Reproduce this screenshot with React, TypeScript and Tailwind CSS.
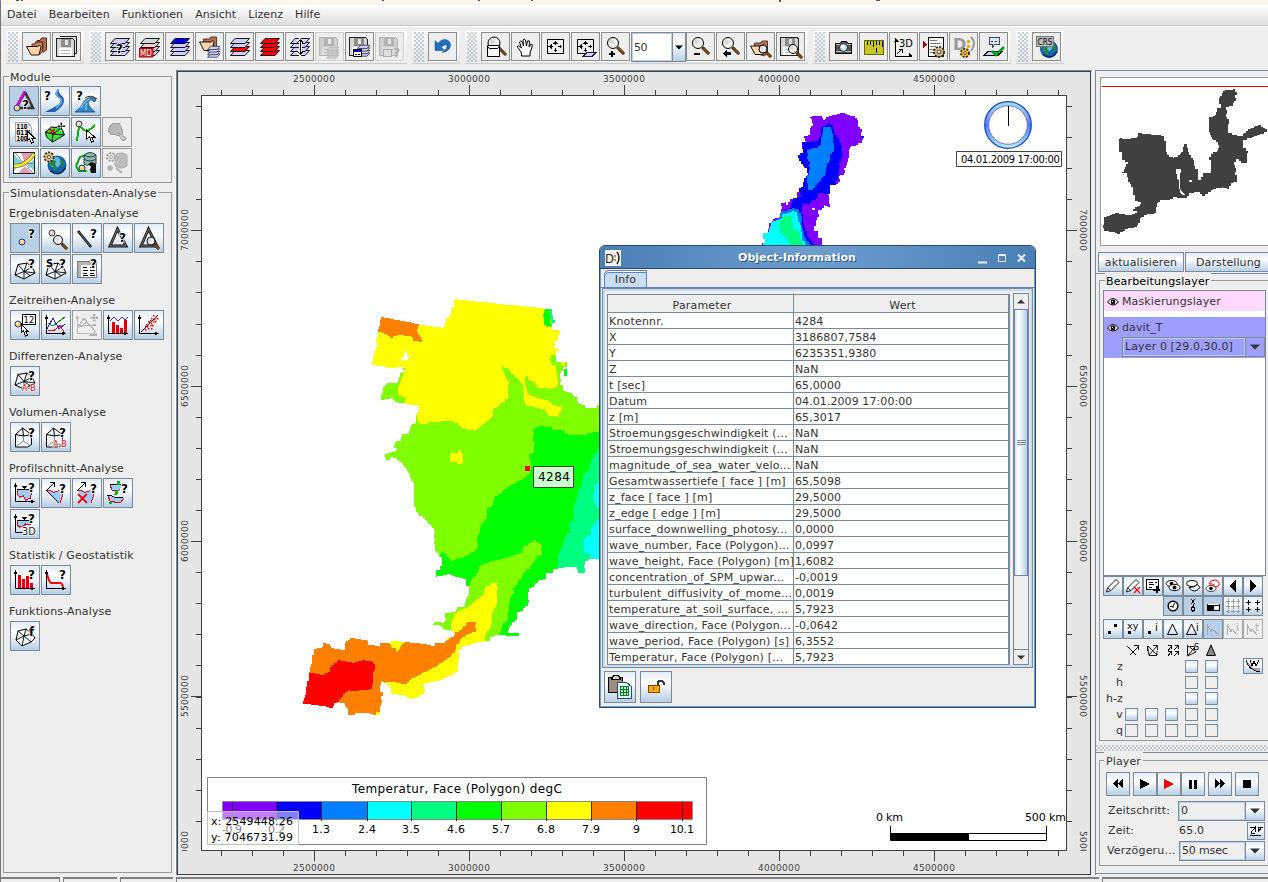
import React from "react";

type Kids = { children?: React.ReactNode };

/* ---------- icon helpers ---------- */
const Q = ({ x = 18, y = 14, s = 12, t = "?" }: { x?: number; y?: number; s?: number; t?: string }) => (
  <text x={x} y={y} fontSize={s} fontWeight="bold" fontFamily="DejaVu Sans" fill="#000" stroke="#fff" strokeWidth="1.600" paintOrder="stroke">{t}</text>
);
const Mag = ({ x, y, r = 5 }: { x: number; y: number; r?: number }) => (
  <g shapeRendering="auto">
    <path d={`M${x + r * 0.8} ${y + r * 0.8}L${x + r * 2} ${y + r * 2}`} stroke="#2a1405" strokeWidth="3" />
    <path d={`M${x + r * 0.9} ${y + r * 0.9}L${x + r * 2} ${y + r * 2}`} stroke="#8b4a14" strokeWidth="1.800" />
    <circle cx={x} cy={y} r={r} fill="#efefec" stroke="#000" />
    <circle cx={x - r * 0.25} cy={y - r * 0.25} r={r * 0.4} fill="#d5d5d2" />
  </g>
);
const Node = ({ x, y }: { x: number; y: number }) => (
  <g shapeRendering="auto">
    <circle cx={x} cy={y} r="3" fill="#ffc878" stroke="#1c3f94" />
    <circle cx={x - 0.6} cy={y - 0.8} r="1" fill="#fff" />
  </g>
);
const Layers = ({ fills, x = 0, y = 0, k = 1, stroke = "#000" }: { fills: string[]; x?: number; y?: number; k?: number; stroke?: string }) => (
  <g transform={`translate(${x} ${y}) scale(${k})`} shapeRendering="auto">
    {[3, 2, 1, 0].map((i) => (
      <path key={i} d={`M10 ${6.5 + i * 4}h14.5l-4.500 5h-14.500z`} fill={fills[i]} stroke={stroke} strokeWidth=".9" />
    ))}
  </g>
);
const L = "#ccccff";
const R = "#ff0000";
const G = "#cdcdcd";
const OneFolder = () => (
  <g shapeRendering="auto">
    <path d="M8.500 17V7h6l1.500-2h5.500v12l-3 3z" fill="#b9714e" stroke="#3a1a0c" strokeWidth=".8" />
    <path d="M4.500 10h12l1-1.500 1.500 1.500-2 8.500h-8z" fill="#ffd3a8" stroke="#000" strokeWidth=".9" />
  </g>
);
const Floppy = ({ dim, x = 0, y = 0 }: { dim?: boolean; x?: number; y?: number }) => (
  <g transform={`translate(${x} ${y})`}>
    <path d="M4.500 5.500h16l2 2v16h-18z" fill={dim ? "#cfcfcf" : "#d6d6d6"} stroke={dim ? "#b4b4b4" : "#222"} />
    <path d="M9 6h10v8h-10z" fill={dim ? "#b4b4b4" : "#8e8e8e"} />
    <path d="M13 7h3v5h-3z" fill="#e6e6e6" />
    <path d="M7 15h13v8h-13z" fill={dim ? "#dedede" : "#fafafa"} />
    <path d="M9 17.500h9M9 20.500h9" stroke="#bbb" />
  </g>
);
const Mesh = ({ y = 0 }: { y?: number }) => (
  <g transform={`translate(0 ${y})`} stroke="#000" fill="#f2f6fa" shapeRendering="auto">
    <path d="M8 10.500l9-1.500 5 4 3 6-11 6-9-4z" />
    <path d="M8 10.500l6 7 3-8.500M14 17.500l11 1.500M14 17.500l-9 3.500M14 17.500v7M14 17.500l6 4M14 17.500l8-4.500" fill="none" strokeWidth=".9" />
  </g>
);
const Axes = ({ c = "#000" }: { c?: string }) => (
  <g>
    <path d="M5.500 6v17.500h19" fill="none" stroke={c} strokeWidth="1.200" />
    <path d="M3.500 9l2-4 2 4zM21 21.500l4 2-4 2z" fill={c} />
  </g>
);
const Gear = ({ x, y, r = 5, c = "#d8b878" }: { x: number; y: number; r?: number; c?: string }) => (
  <g shapeRendering="auto">
    <circle cx={x} cy={y} r={r} fill={c} stroke="#3a2a10" strokeWidth="2" strokeDasharray="2 1.300" />
    <circle cx={x} cy={y} r={r - 1} fill={c} />
    <circle cx={x} cy={y} r={r * 0.35} fill="#fff" stroke="#3a2a10" strokeWidth=".8" />
  </g>
);
const Globe = ({ x, y, r }: { x: number; y: number; r: number }) => (
  <g shapeRendering="auto">
    <circle cx={x} cy={y} r={r} fill="#1a5fb0" />
    <circle cx={x - r * 0.2} cy={y - r * 0.3} r={r * 0.6} fill="#5fb6e6" />
    <path d={`M${x - r * 0.9} ${y - r * 0.1}q${r * 0.4} ${-r * 0.6} ${r * 0.8} ${-r * 0.3}l-1 3 2 3-2 4q-3-2-2-5zM${x + r * 0.3} ${y - r * 0.6}l${r * 0.5} 3-1 5-3-3z`} fill="#1d8a3a" />
    <path d={`M${x - r * 0.7} ${y + r * 0.6}q${r} ${r * 0.7} ${r * 1.6}-3`} stroke="#0a2c60" strokeWidth="1.500" fill="none" />
  </g>
);
const Four = () => (
  <g stroke="#000" fill="none">
    <path d="M6.500 7.500h16v14h-16z" />
    <path d="M14.500 10v3M14.500 16v3M9 14.500h3M17 14.500h3" />
    <path d="M12 11.500l2.500-3 2.500 3zM12 17.500l2.500 3 2.500-3zM10.500 12l-3 2.500 3 2.500zM18.500 12l3 2.500-3 2.500z" fill="#000" stroke="none" />
  </g>
);
const Red = ({ x, y, t = "A-B" }: { x: number; y: number; t?: string }) => (
  <text x={x} y={y} fontSize="9.500" fontFamily="DejaVu Sans" fill="#e00000" stroke="#fff" strokeWidth="1.200" paintOrder="stroke" textLength="14" lengthAdjust="spacingAndGlyphs">{t}</text>
);
const Volume = () => (
  <g stroke="#000" fill="#f3f7fb" shapeRendering="auto">
    <path d="M5.500 12.500l7-6.500 9 6.500v10l-4 2.500h-12z" />
    <path d="M5.500 12.500l8 1.500 8-1.500M12.500 6l1 8" fill="none" />
    <path d="M13.500 14v5l-7 5M13.500 19l6 4" fill="none" stroke="#888" />
  </g>
);

const icons: Record<string, React.ReactNode> = {
  open: (
    <g shapeRendering="auto" strokeWidth=".9">
      <path d="M15 15V8.500h3l1.500-2.500h5v12l-3 2z" fill="#b9714e" stroke="#4a2010" />
      <path d="M13 10h9l-1 7h-5z" fill="#f0bd94" stroke="#7a3c20" />
      <path d="M10 17v-5h3l1.500-2h6v10l-3 2z" fill="#c98058" stroke="#4a2010" />
      <path d="M4.500 14.500h11.500l1.500-1.500 1.500 1.500-2 8.500h-8z" fill="#ffd3a8" stroke="#000" />
    </g>
  ),
  saveAll: <g><path d="M8 4.500h16.500v17h-2" fill="#ddd" stroke="#222" /><Floppy x={-0.500} y={0.500} /></g>,
  layQ: <g><Layers fills={[L, L, L, L]} /><Q x={11} y={21} /></g>,
  layMD: <g><Layers fills={["#cdd9dd", "#ffc8c8", "#cdd9dd", L]} /><path d="M4 16h14v9h-14z" fill="#c41b1b" stroke="#900" strokeWidth=".5" /><text x="5" y="23.500" fontSize="8" fill="#fff" fontFamily="DejaVu Sans" textLength="12" lengthAdjust="spacingAndGlyphs">MD</text></g>,
  layBlue: <Layers fills={["#0000e6", L, L, L]} />,
  layFolder: <g><OneFolder /><Layers fills={[L, L, L, L]} x={9} y={10} k={0.65} /></g>,
  layRed1: <Layers fills={[L, L, R, L]} />,
  layRed: <Layers fills={[R, R, R, R]} />,
  layMove: <g><Layers fills={[L, L, L, L]} /><path d="M15 8v14M12.500 10.500L15 8l2.500 2.500M12.500 19.500L15 22l2.500-2.500" stroke="#fff" strokeWidth="3" fill="none" /><path d="M15.500 8v14M12.500 10.500L15.500 8l2.500 2.500M12.500 19.500L15.500 22l2.500-2.500" stroke="#000" fill="none" /></g>,
  saveDim: <g><Floppy dim /><Layers fills={[G, G, G, G]} stroke="#aaa" x={8} y={11} k={0.65} /></g>,
  saveLay: <g><Floppy /><Layers fills={[L, L, L, L]} x={9} y={9} k={0.65} /><path d="M8.500 17.500h8v7h-8z" fill="#fff" stroke="#000" /><path d="M9 18h7v2h-7z" fill="#00c" /><path d="M10 22.500h2M13 22.500h2" stroke="#000" /></g>,
  saveDimQ: <g><Floppy dim /><path d="M8.500 17.500h8v7h-8z" fill="#ddd" stroke="#aaa" /><text x="18" y="25" fontSize="12" fontWeight="bold" fill="#b0b0b0" fontFamily="DejaVu Sans">?</text></g>,
  undo: <path shapeRendering="auto" d="M7 8.500v10h9.500l-3.200-3.200q3-3.300 5.200-2.300 2 3-4.500 7.500 8-1 8.500-7.500-.5-5.500-6.500-5.500-3.500.500-6 3.800z" fill="#1e6fc0" stroke="#0c4a90" strokeWidth=".5" />,
  magBox: <g><Mag x={13} y={11} r={6} /><path d="M6.500 13.500h12v11h-12z" fill="#fff" stroke="#000" /><path d="M6.500 15.500q6 3 12 0" fill="none" stroke="#000" /></g>,
  hand: <path shapeRendering="auto" d="M10.500 24v-3l-4-6q0-3 4 1l-2-6q1-2 3 0l1 4-.5-6q1-2 2.500 0l1 6 1-5q2-1 2 1l-.5 5 2-3q2 0 1 3l-2 6v3z" fill="#fff" stroke="#000" />,
  fit: <Four />,
  fitLay: <g><Four /><path d="M16 20.500h9l-4 4h-9z" fill={L} stroke="#223" /></g>,
  zoomIn: <g><Mag x={12} y={11} r={5.500} /><path d="M8 21h6v2h-6zM10 19h2v6h-2z" fill="#000" /></g>,
  zoomOut: <g><Mag x={12} y={11} r={5.500} /><path d="M8 21h6v2h-6z" fill="#000" /></g>,
  zoomBack: <g><Mag x={12} y={11} r={5.500} /><path d="M7 21.500l4-3.500v2h4v3h-4v2z" fill="#000" /></g>,
  zoomFolder: <g><g transform="translate(0 4)"><OneFolder /></g><Mag x={17} y={17} r={4} /></g>,
  zoomSave: <g><Floppy y={-0.500} /><Mag x={17} y={17} r={4.500} /></g>,
  camera: <g><path d="M6.500 11.500h4l2-2h5l2 2h3v10h-16z" fill="#555" stroke="#000" /><path d="M7 12.500h15M7 19.500h15" stroke="#bbb" /><circle cx="14.500" cy="15.500" r="4" fill="#bfe9ee" stroke="#222" shapeRendering="auto" /><circle cx="13.500" cy="14.500" r="1.500" fill="#fff" /></g>,
  ruler: <g><path d="M5.500 8.500h19v14h-19z" fill="#c8c82a" stroke="#6b6b00" /><path d="M8.500 9v4M11.500 9v4M14.500 9v6M17.500 9v4M20.500 9v4M23 9v6M17.500 16v5" stroke="#000" /></g>,
  axis3d: <g><path d="M6.500 7v17h16M8 22l5-5M10 17.500h3v3" stroke="#000" fill="none" /><path d="M5 10l1.500-4L10 10zM20 21v3h4z" /><text x="10" y="15" fontSize="11" fontFamily="DejaVu Sans" textLength="14" lengthAdjust="spacingAndGlyphs">3D</text></g>,
  scriptGear: <g><path d="M9.500 5.500h15v19h-15z" fill="#fff" stroke="#000" /><path d="M11 8.500h7M11 11.500h10M11 14.500h6M11 17.500h5M11 20.500h4" stroke="#777" /><path d="M4 9l4 3.500-4 3.500z" fill="#a00" /><Gear x={20} y={20} c="#c8b48a" /></g>,
  dGear: <g><text x="4" y="18" fontSize="16" fontFamily="DejaVu Sans" fontWeight="bold" fill="#999">D</text><path d="M18 8h2.500v2.500h-2.500zM18 13h2.500v2.500h-2.500z" fill="#fa0" /><path d="M22 5q6 6 0 14" fill="none" stroke="#999" strokeWidth="2" shapeRendering="auto" /><Gear x={16} y={21} r={4} c="#ffb62e" /></g>,
  check: <g><path d="M10.500 5.500h10v7h-5l-2 3v-3h-3z" fill="#dbe8fa" stroke="#446" /><path d="M12 9.500h2M16 9.500h2" stroke="#223a66" /><path d="M9 19.500h14l-4 4h-14z" fill="#c8d4fa" stroke="#000" /><path d="M13 19l4 4 8-8" stroke="#0a9a20" strokeWidth="2.600" fill="none" shapeRendering="auto" /></g>,
  crs: <g><Globe x={17} y={17} r={9} /><path d="M4.500 4.500h17v10h-17z" fill="#bbb" stroke="#777" /><text x="5.500" y="13" fontSize="9" fontFamily="DejaVu Sans" textLength="15" lengthAdjust="spacingAndGlyphs">CRS</text></g>,
  triQ: <g shapeRendering="auto"><path d="M16 6L7 22h17L16 6" fill="none" stroke="#333" strokeWidth="2.600" /><path d="M16 5L7 22" stroke="#d400d4" strokeWidth="2.600" /><Node x={8} y={22} /><Q x={13} y={23} /></g>,
  river: <g shapeRendering="auto"><path d="M18 3q-6 5 1 9 4 4-3 8-5 3-11 6h10q12-8 8-15-5-4-4-7z" fill="#1f62ae" /><path d="M18 4q-4 5 3 9 2 4-5 9" stroke="#6db0e8" strokeWidth="1.600" fill="none" /><Q x={4} y={14} /></g>,
  wave: <g shapeRendering="auto"><path d="M4 26q7-5 8-9 4-7 12-5 2 3-1 4-2-3-4-2-3 2-1 6 2 3 6 6z" fill="#2f87c8" stroke="#15406e" strokeWidth=".8" /><path d="M10 22q4-8 9-9M15 24q-1-5 1-7" stroke="#a8e2f8" fill="none" /><path d="M14 12q6-4 12 1" stroke="#333" fill="none" /><Q x={5} y={14} /></g>,
  bits: <g><path d="M6.500 5.500h12l4 5v14h-16z" fill="#f0f0f0" stroke="#aaa" />{["110", "011(", "100"].map((s, i) => <text key={i} x="7.500" y={11.500 + i * 6} fontSize="7" fontWeight="bold" fontFamily="DejaVu Sans" textLength={i === 1 ? 14 : 11} lengthAdjust="spacingAndGlyphs">{s}</text>)}<path d="M18.500 14v9l2-1 2 4 2-1-2-4h3z" fill="#fff" stroke="#000" /></g>,
  polyPlus: <g><path d="M5.500 15l6-5 10 1 3 7-12 7-6-5z" fill="#35e835" stroke="#000" shapeRendering="auto" /><path d="M5 15l8 2 8-6M13 17l11 1M13 17l-1 8" stroke="#000" fill="none" shapeRendering="auto" /><path d="M9 12l7 5M10 17l4-5" stroke="#d00" strokeWidth="1.600" /><path d="M17 8h8v2h-8zM20 5h2v8h-2z" fill="#000" stroke="#fff" strokeWidth=".5" /></g>,
  pathSel: <g><path d="M6 24l2-15 8 6 8-7" stroke="#0b0" strokeWidth="2" fill="none" /><Node x={8} y={7} /><path d="M15.500 13v9l3-2 2 5 2-1-2-4h3z" fill="#fff" stroke="#000" /></g>,
  dimPoly: <g><path d="M6 12l5-6h6l3 6v7l-6-1-6-1z" fill="#b8b8b8" stroke="#a5a5a5" /><path d="M16 15l8 6-2 3-3-2z" fill="#ccc" stroke="#aaa" /></g>,
  map: <g><path d="M4.500 4.500h21v21h-21z" fill="#fff" stroke="#222" /><path d="M12 5h12l-8 9zM9 25l7-7 6 7z" fill="#e89ab4" /><path d="M5 7l8 7-8 9zM18 17l7-5v10z" fill="#79cfd8" /><path d="M6 5l18 20M24 16l-9-1" stroke="#777" strokeWidth=".8" /><g shapeRendering="auto"><path d="M5 18q8 0 12-4 5-3 8-8" stroke="#555" strokeWidth="4" fill="none" /><path d="M5 18q8 0 12-4 5-3 8-8" stroke="#ffe32e" strokeWidth="2.800" fill="none" /></g></g>,
  globeGear: <g><Globe x={17} y={17} r={9.500} /><Gear x={9} y={9} r={4.500} c="#e0c090" /></g>,
  dbHead: <g shapeRendering="auto"><path d="M5 18l4-9 6-2M5 18l3 5h8" stroke="#0a0" strokeWidth="2" fill="none" /><path d="M13 7q6-5 12 0v9q-6 4-12 0z" fill="#8fb8ae" stroke="#244" /><path d="M13 7q6 4 12 0M13 11q6 4 12 0" stroke="#244" fill="none" /><path d="M17 17q2-5 8-1v9h-5l-1-3q-3 0-2-5z" fill="#111" /><path d="M16 18q3-2 4 1l-2 4z" fill="#fff" /><Node x={11} y={20} /></g>,
  dimGear: <g shapeRendering="auto"><Gear x={9} y={9} r={4} c="#c4c4c4" /><path d="M3 3h11v11h-11z" fill="#eee" opacity=".6" /><path d="M13 7q6-4 12 0v11q-6 4-12 0z" fill="#bdbdbd" stroke="#b0b0b0" /><circle cx="8" cy="20" r="2.800" fill="#b4b4b4" /><path d="M14 20l6 5" stroke="#bbb" strokeWidth="2.500" /></g>,
  nodeQ: <g><Node x={12} y={19} /><Q x={18} y={15} /></g>,
  nodeMag: <g><Node x={11} y={10} /><Mag x={17} y={17} r={4.500} /></g>,
  lineQ: <g shapeRendering="auto"><path d="M6 8l13 16" stroke="#000" strokeWidth="2.600" /><path d="M7 9l11 14" stroke="#888" /><Q x={18} y={15} /></g>,
  triangleQ: <g shapeRendering="auto"><path d="M14.500 6L7 23h16z" fill="none" stroke="#111" strokeWidth="2.800" /><path d="M14.500 6L7 23h16z" fill="none" stroke="#999" strokeWidth=".8" /><Q x={16} y={19} /></g>,
  triangleMag: <g shapeRendering="auto"><path d="M14.500 6L7 23h16z" fill="none" stroke="#111" strokeWidth="2.800" /><path d="M14.500 6L7 23h16z" fill="none" stroke="#999" strokeWidth=".8" /><Mag x={17} y={18} r={4} /></g>,
  meshQ: <g><Mesh /><Q x={18} y={14} /></g>,
  meshS: <g><Mesh /><Q x={5} y={13} t="S" s={10} /><Q x={18} y={14} /></g>,
  tableQ: <g><path d="M5.500 7.500h19v16h-19z" fill="#fff" stroke="#777" /><path d="M6 8h3v15h-3zM9 8h15v3h-15z" fill="#b4b4b4" /><path d="M11 13.500h4M11 16.500h5M11 19.500h4M11 21.500h5M18 13.500h4M18 16.500h5M18 19.500h4M18 21.500h5" stroke="#000" /><Q x={18} y={14} /></g>,
  node12: <g><Node x={8} y={14} /><path d="M12.500 4.500h13v10h-13z" fill="#fff" stroke="#000" /><text x="13.500" y="13" fontSize="9.500" fontFamily="DejaVu Sans" textLength="11" lengthAdjust="spacingAndGlyphs">12</text><path d="M11.500 14v8l2-1 2 5 2-1-2-4h2z" fill="#fff" stroke="#000" /></g>,
  chart: <g><path d="M7 13l5 3 12-9" stroke="#080" fill="none" /><path d="M6 19l6-11 6 11 6-5" stroke="#22f" fill="none" /><path d="M7 20.500h6l6-5 5 8" stroke="#f00" fill="none" /><Axes /></g>,
  chartDim: <g><Axes c="#bbb" /><path d="M6 15h18M6 17l6-9 6 8 6-2M7 18l8-6 9 10" stroke="#b4b4b4" fill="none" /><path d="M18 6h8v3h-8zM20.500 3.500h3v8h-3zM17 23h8v3h-8z" fill="#b0b0b0" stroke="#eee" strokeWidth=".5" /></g>,
  bars: <g><path d="M9 12h3v12h-3zM13 15h3v9h-3zM17 18h3v6h-3zM21 10h3v14h-3z" fill="#e00000" /><path d="M7 11l4-4 4 4 4-4 3 3 3-3" stroke="#22f" fill="none" /><Axes /></g>,
  scatter: <g><path d="M7 22L24 5" stroke="#000" />{[[12, 14], [15, 12], [17, 8], [19, 11], [14, 18], [18, 15], [21, 7], [21, 11], [11, 19], [16, 15], [17, 18], [19, 5], [14, 11], [23, 8], [16, 10], [11, 16], [20, 9], [13, 16], [17, 13]].map(([a, b], i) => <rect key={i} x={a} y={b} width="1.500" height="1.500" fill="#e00" shapeRendering="auto" />)}<Axes /></g>,
  meshAB: <g><Mesh y={-2} /><Q x={18} y={14} /><Red x={12} y={25} /></g>,
  volQ: <g><Volume /><Q x={18} y={15} /></g>,
  volAB: <g><Volume /><Q x={18} y={15} /><Red x={12} y={25} /></g>,
  prof: <g><path d="M7 12h14l1 4-2 4-4 2-2-4-4 1-2-3z" fill="#9cccff" /><path d="M7.500 12v4l2 3 4-1 2 4 5-2 1-5" stroke="#e00" fill="none" /><path d="M7 11.500h14" stroke="#000" /><path d="M11 8h6l-3 3z" /><Axes /><Q x={18} y={14} /></g>,
  prof3d: <g><path d="M7 12h14v4l-5-1-3 3h-5z" fill="#9cccff" /><path d="M7.500 12v4l2 2 4-1 2-2 5 1" stroke="#e00" fill="none" /><path d="M7 11.500h14" stroke="#000" /><path d="M11 8h6l-3 3z" /><path d="M5.500 6v17.500h7" stroke="#000" fill="none" strokeWidth="1.200" /><path d="M3.500 9l2-4 2 4z" /><Q x={18} y={14} /><text x="12" y="26" fontSize="11" fontFamily="DejaVu Sans" fill="#222" stroke="#fff" strokeWidth="1.600" paintOrder="stroke" textLength="14" lengthAdjust="spacingAndGlyphs">3D</text></g>,
  wedge: <g><path d="M6 13h13l4 2-4 10z" fill="#9cccff" /><path d="M5 12.500h4l4 2 5-2M22 16l-3 9" stroke="#e00" fill="none" /><path d="M6 13l12 12M5 13l8-8M9 4.500h4v4" stroke="#000" fill="none" /><Q x={18} y={15} /></g>,
  wedgeX: <g><path d="M6 13h13l4 2-4 10h-5z" fill="#9cccff" /><path d="M5 12.500h4l4 2 5-2M22 16l-3 9" stroke="#e00" fill="none" /><path d="M5 13l8-8M9 4.500h4v4" stroke="#000" fill="none" /><path d="M6 16l9 9M15 16l-9 9" stroke="#f00" strokeWidth="1.800" shapeRendering="auto" /><Q x={18} y={15} /></g>,
  flow: <g><path d="M7 7h12l-3 6-6 1z" fill="#9cccff" /><path d="M7 7l2 5h3l2 2 3-3" stroke="#e00" fill="none" /><path d="M5 18l7 1 9 1-4 4-8 1z" fill="#9cccff" /><path d="M5 18l2 5h3l3 2 5-1 3-4" stroke="#e00" fill="none" /><path d="M7 6.500h12M4 17.500h4l4 2h8" stroke="#000" fill="none" /><path d="M14 3h3v4h-3zM13 12h3l-2 5h-3zM6 24h3v2h-3z" fill="#0b0" /><Q x={18} y={15} /></g>,
  stat: <g><path d="M8 10h3v14h-3zM12 14h3v10h-3zM16 11h3v13h-3zM20 18h3v6h-3z" fill="#e00000" /><Axes /><Q x={18} y={14} /></g>,
  curve: <g><path d="M6 9q2 8 4 9h9q3 0 3 6" stroke="#f00" strokeWidth="2" fill="none" shapeRendering="auto" /><Axes /><Q x={18} y={14} /></g>,
  func: <g shapeRendering="auto"><path d="M8 10l8-2 6 5 3 4-4 4-9 4-6-6z" fill="#f4f8fb" stroke="#000" /><path d="M8 10l6 5 8-2M14 15l7 6M14 15l-2 10M14 15l-8 4M16 8l-2 7" stroke="#000" strokeWidth=".9" fill="none" /><Q x={19} y={15} t="f" /></g>,
};

/* icons for the 20px tool buttons */
const tiny: Record<string, React.ReactNode> = {
  pencil: <path shapeRendering="auto" d="M3.500 16l1-4L13 3.500l3 3-8 8zM5 12l3 3" fill="#fff" stroke="#000" strokeWidth=".9" />,
  pencilX: <g shapeRendering="auto"><path d="M3.500 16l1-4L13 3.500l3 3-8 8zM5 12l3 3" fill="#fff" stroke="#000" strokeWidth=".9" /><path d="M11 11l6 6M17 11l-6 6" stroke="#f00" strokeWidth="1.200" /></g>,
  listPlus: <g><path d="M3.500 3.500h12v10h-12z" fill="#fff" stroke="#000" /><path d="M6 6.500h4M6 8.500h5M6 11.500h3M12 6.500h2" stroke="#000" /><path d="M10 13h7v2h-7zM13 10h2v7h-2z" /></g>,
  eye: <g shapeRendering="auto"><ellipse cx="8.500" cy="7.500" rx="5.500" ry="3" fill="#fff" stroke="#000" /><circle cx="8.500" cy="7.500" r="1.800" /><ellipse cx="11.500" cy="11.500" rx="5.500" ry="3.200" fill="#fff" stroke="#000" /><circle cx="11.500" cy="11.500" r="2" /></g>,
  eyeShut: <g shapeRendering="auto"><ellipse cx="9" cy="7.500" rx="5.500" ry="3" fill="#fff" stroke="#000" /><path d="M6 11.500q5 7 11 0l-2.500-3q-3 3-8.500 3z" fill="#fff" stroke="#000" /></g>,
  eyeRed: <g shapeRendering="auto"><ellipse cx="8" cy="12.500" rx="5" ry="3" fill="#fff" stroke="#444" /><circle cx="8" cy="12.500" r="1.800" /><path d="M6 8q1-4 6-4 5 1 4 5-1 3-5 1l-1-2z" fill="#fff" stroke="#f00" /></g>,
  prev: <path d="M13 4v12l-7-6z" fill="#000" />,
  next: <path d="M7 4v12l7-6z" fill="#000" />,
  clock: <g shapeRendering="auto"><circle cx="10" cy="10" r="4.800" fill="#fff" stroke="#000" strokeWidth="1.500" /><path d="M10 10l2-3M10 10.500h-3M10 10v2" stroke="#000" /></g>,
  xy: <path d="M8 3l4 5M12 3l-4 5M10 16l-2-3 2-3 2 3-2 3M10 8v2" stroke="#000" fill="none" />,
  half: <g><path d="M4.500 8v6.500h12V8M4.500 9.500h12" fill="#fff" stroke="#000" /><path d="M5 10h6v4h-6z" fill="#000" /></g>,
  gridDim: <path d="M3 5.500h4M8 5.500h4M13 5.500h4M3 10.500h4M8 10.500h4M13 10.500h4M3 15.500h4M8 15.500h4M13 15.500h4M5.500 3v5M10.500 3v5M15.500 3v5M5.500 9v4M10.500 9v4M15.500 9v4M5.500 14v3M10.500 14v3M15.500 14v3" stroke="#999" />,
  grid: <path d="M3 6.500h5M12 6.500h5M3 13.500h5M12 13.500h5M5.500 4v5M14.500 4v5M5.500 11v5M14.500 11v5" stroke="#000" />,
  pts: <path d="M5 12h3v3h-3zM11 5h3v3h-3z" />,
  ptXY: <g><path d="M5 12h3v3h-3z" /><text x="4" y="10" fontSize="9.500" fontFamily="DejaVu Sans">xy</text></g>,
  ptI: <g><path d="M5 12h3v3h-3z" /><text x="12" y="12" fontSize="10" fontFamily="DejaVu Sans">i</text></g>,
  tri: <path shapeRendering="auto" d="M9.500 5l-5 10.500h10z" fill="none" stroke="#000" />,
  triI: <g><path shapeRendering="auto" d="M8.500 5l-5 10.500h10z" fill="none" stroke="#000" /><text x="13" y="12" fontSize="10" fontFamily="DejaVu Sans">i</text></g>,
  cur: <path d="M4 15.500V5l4 8 1-3 7 6" fill="none" stroke="#98a8b8" />,
  curI: <g><path d="M4 15.500V5l4 8 1-3 5 6" fill="none" stroke="#b0b0b0" /><text x="13" y="12" fontSize="10" fill="#aaa" fontFamily="DejaVu Sans">i</text></g>,
  curT: <g><path d="M4 15.500V5l4 8 1-3 5 6" fill="none" stroke="#b0b0b0" /><text x="12" y="12" fontSize="10" fill="#aaa" fontFamily="DejaVu Sans">t</text></g>,
};

/* ---------- widgets ---------- */
const Svg30 = ({ children }: Kids) => <svg width="28" height="28" viewBox="1 1 28 28" className="block" shapeRendering="crispEdges">{children}</svg>;

const grad = "bg-linear-to-b from-[#e3ecf5] via-white via-35% to-[#b8cfe5]";
const dots = "bg-[radial-gradient(circle_at_1px_1px,#8f9dab_0.6px,transparent_0.8px),radial-gradient(circle_at_3px_3px,#8f9dab_0.6px,transparent_0.8px)] bg-size-[4px_4px]";

function ToolBtn({ n }: { n: string }) {
  const dim = n.startsWith("saveDim");
  return (
    <div className={`mr-px h-[29px] w-[29px] overflow-hidden border bg-[#eeeeee] shadow-[1px_1px_0_#fff] ${dim ? "border-[#cccccc]" : "border-[#8c8c8c]"}`}>
      <Svg30>{icons[n]}</Svg30>
    </div>
  );
}

function ToolGroup({ w, children }: { w: number } & Kids) {
  return (
    <div className="mr-[5px] flex h-[33px] shrink-0 items-start border-b border-[#d0d0d0] bg-linear-to-b from-[#fbfbfb] to-[#e6e6e6] pt-px pl-[2px]" style={{ width: w }}>
      <div className={`mr-1 h-[30px] w-[10px] ${dots}`} />
      {children}
    </div>
  );
}

function PanelBtn({ n, on, dim }: { n: string; on?: boolean; dim?: boolean }) {
  const bg = on ? "bg-[#b8cfe5] border-[#7a8a99]" : dim ? "bg-[#eeeeee] border-[#999999]" : `${grad} border-[#7a8a99]`;
  return <div className={`h-[30px] w-[30px] overflow-hidden border ${bg}`}><Svg30>{icons[n]}</Svg30></div>;
}

function Row({ names }: { names: string[] }) {
  return (
    <div className="flex gap-px">
      {names.map((n) => <PanelBtn key={n} n={n.replace("*", "")} on={n.endsWith("*")} dim={/dim/i.test(n)} />)}
    </div>
  );
}

function Section({ title, rows }: { title: string; rows: string[][] }) {
  return (
    <div>
      <div className="h-[26px] pt-[10px] text-[11px] leading-[14px]">{title}</div>
      <div className="flex flex-col gap-px pl-px">{rows.map((r, i) => <Row key={i} names={r} />)}</div>
    </div>
  );
}

function SmallBtn({ n, on, dim }: { n: string; on?: boolean; dim?: boolean }) {
  const bg = on ? "bg-[#b8cfe5] border-[#7a8a99]" : dim ? "bg-[#eeeeee] border-[#aaaaaa]" : `${grad} border-[#7a8a99]`;
  return (
    <div className={`h-[20px] w-[20px] border ${bg}`}>
      <svg width="18" height="18" viewBox="1 1 18 18" className="block" shapeRendering="crispEdges">{tiny[n]}</svg>
    </div>
  );
}

const Arrow = () => <svg width="10" height="6" className="block"><path d="M0 0.500h10l-5 5z" fill="#333" /></svg>;

/* ---------- map ---------- */

/* Turns a smooth outline into the stepped edge of the underlying cell grid. */
function cells(points: string, step = 9, snap = 3, jitter = 2.5) {
  const p = points.split(" ").map((s) => s.split(",").map(Number));
  const out: string[] = [];
  let py = 0;
  let n = 7;
  p.forEach(([x1, y1], i) => {
    const [x2, y2] = p[(i + 1) % p.length];
    const k = Math.max(1, Math.round(Math.hypot(x2 - x1, y2 - y1) / step));
    for (let j = 0; j < k; j++) {
      n = (n * 137 + 59) % 1009;
      const off = j === 0 ? 0 : (n / 1009 - 0.5) * 2 * jitter;
      const x = Math.round((x1 + ((x2 - x1) * j) / k + off) / snap) * snap;
      const y = Math.round((y1 + ((y2 - y1) * j) / k) / snap) * snap;
      if (out.length) out.push(`${x},${py}`);
      out.push(`${x},${y}`);
      py = y;
    }
  });
  return out.join(" ");
}

const body = cells("495,28 550,34 625,42 690,48 763,56 788,58 788,90 795,92 795,98 785,98 785,120 808,122 809,135 803,152 795,152 792,175 806,178 806,183 797,184 797,215 832,216 832,232 820,236 812,250 811,285 818,292 818,302 828,305 845,315 863,325 865,342 882,345 884,354 915,354 920,346 930,346 930,808 898,808 885,815 885,850 865,850 862,832 830,830 805,838 790,838 788,848 770,848 768,868 748,872 736,885 722,895 716,905 716,940 700,962 682,968 680,990 660,1012 655,1028 687,1030 687,1037 655,1037 620,1034 608,1042 600,1052 560,1058 518,1072 505,1085 503,1145 490,1155 450,1172 420,1178 400,1188 405,1205 390,1222 370,1228 350,1218 305,1210 303,1190 292,1178 270,1174 270,1205 278,1210 270,1276 240,1270 198,1268 196,1276 178,1275 175,1255 165,1240 150,1235 132,1240 130,1255 118,1250 80,1245 40,1240 48,1200 58,1147 60,1140 72,1078 95,1070 98,1060 118,1062 122,1075 160,1080 165,1060 180,1043 232,1052 235,1065 268,1070 270,1060 300,1060 302,1053 345,1056 400,1062 432,1068 435,1060 466,1060 470,1043 492,1040 492,1022 465,1018 455,1008 430,1003 432,996 462,1000 468,985 465,968 498,966 500,952 520,950 525,935 538,908 537,888 530,888 528,868 510,862 480,852 440,860 438,840 452,838 455,800 440,782 435,770 432,715 410,690 378,660 372,625 372,580 360,550 345,528 322,505 308,500 300,510 288,505 286,492 312,482 322,475 313,465 318,452 335,452 337,432 358,430 362,405 375,400 378,375 388,347 345,340 325,335 310,325 285,330 273,325 280,290 292,280 318,278 328,262 330,250 345,240 338,230 305,235 290,230 245,224 255,180 265,125 273,82 330,92 388,104 462,115 467,85 480,75 486,52 495,45");
const bodyAreas: [string, string][] = [
  ["#ffff00", "495,20 763,20 763,98 770,108 785,112 820,120 815,190 782,198 782,222 797,225 797,245 803,248 803,290 790,296 740,293 735,275 720,270 708,250 706,280 712,310 740,325 775,332 785,345 805,348 815,342 812,370 808,380 780,378 765,358 710,345 700,320 698,285 690,270 660,240 638,222 636,240 655,275 656,320 645,335 612,360 610,380 570,415 560,422 515,415 505,400 490,392 420,397 415,403 383,398 380,347 345,345 345,320 325,310 325,285 332,265 345,235 335,250 305,245 230,230 255,120 268,70 462,105 470,30"],
  ["#00ff00", "762,45 780,45 780,105 785,108 770,110 762,98"],
  ["#00ff80", "779,45 800,45 800,99 785,99 785,88 779,86"],
  ["#ffff00", "812,216 826,216 824,227 816,226"],
  ["#ffff00", "482,488 503,488 505,480 512,480 512,490 520,492 518,521 502,522 500,516 480,518"],
  ["#ff8000", "270,70 388,90 383,135 395,155 370,150 368,140 335,134 322,138 310,143 290,132 255,122"],
  ["#00ff00", "730,418 745,408 780,412 785,420 822,422 825,433 885,437 890,428 935,426 935,860 803,850 720,925 700,1050 620,1045 620,1034 640,1000 655,985 660,930 675,885 700,850 730,815 740,797 755,793 755,762 738,750 705,768 695,790 640,808 600,815 570,830 565,850 545,870 538,890 525,890 525,875 425,870 425,830 455,785 465,795 480,812 515,803 540,790 560,775 562,745 570,710 590,680 592,655 605,645 612,625 650,590 690,570 720,550 722,510 718,492 733,485 735,455 728,448"],
  ["#00ff80", "935,460 920,490 905,510 895,545 880,560 875,590 862,610 862,630 852,645 850,690 840,700 840,730 825,745 815,775 805,800 803,860 935,860"],
  ["#00ffff", "912,585 922,580 935,580 935,655 920,652 912,630"],
  ["#00ffff", "935,688 920,690 918,705 905,715 902,735 888,740 880,762 882,788 895,792 900,803 915,808 935,815"],
  ["#ffff00", "605,878 623,882 620,945 605,978 603,1018 590,1030 580,1075 515,1090 510,1180 415,1200 400,1240 290,1230 290,1178 300,1100 483,1030 485,985 500,962 530,950 545,938 580,912 582,895"],
  ["#ff8000", "530,996 557,996 557,1025 530,1035 510,1055 498,1070 495,1090 470,1110 440,1130 400,1150 372,1165 350,1182 300,1175 270,1174 290,1210 275,1285 170,1285 30,1245 50,1060 180,1025 430,1040 466,1050 488,1035 495,1025 515,1015"],
  ["#ffff00", "298,1045 348,1045 345,1060 333,1070 328,1083 320,1085 318,1073 305,1070"],
  ["#ffff00", "258,1267 280,1267 280,1280 258,1280"],
  ["#ff0000", "145,1110 185,1118 205,1112 215,1110 245,1115 255,1130 245,1198 225,1200 200,1203 180,1200 160,1220 148,1235 132,1240 130,1265 25,1250 50,1147 100,1155 120,1140 120,1130"],
];

const majorsX = [314, 469, 624, 779, 934];
const minorsX = Array.from({ length: 28 }, (_, i) => 221 + i * 31);
const majorsY: [number, string][] = [[230, "7000000"], [386, "6500000"], [541, "6000000"], [696, "5500000"], [852, "5000000"]];
const minorsY = Array.from({ length: 24 }, (_, i) => Math.round(106 + i * 31.08));

function Txt({ x, y, w, s = 11, fill = "#000", children }: { x: number; y: number; w: number; s?: number; fill?: string } & Kids) {
  return <text x={x} y={y} fontSize={s} textLength={w} fill={fill} fontFamily="DejaVu Sans">{children}</text>;
}

const scale = [["#8000ff", 222, 55], ["#0000ff", 277, 45], ["#0080ff", 322, 46], ["#00ffff", 368, 44], ["#00ff80", 412, 45], ["#00ff00", 457, 45], ["#80ff00", 502, 45], ["#ffff00", 547, 45], ["#ff8000", 592, 45], ["#ff0000", 637, 56]] as [string, number, number][];
const marks = [["-0.9", 222, 20], ["0.2", 268, 17], ["1.3", 312, 18], ["2.4", 358, 18], ["3.5", 402, 18], ["4.6", 447, 18], ["5.7", 492, 18], ["6.8", 537, 18], ["7.9", 582, 18], ["9", 633, 7], ["10.1", 670, 24]] as [string, number, number][];

function MapView() {
  return (
    <svg width="916" height="806" viewBox="176 70 916 806" className="block shrink-0">
      <defs>
        <clipPath id="body"><polygon points={body} /></clipPath>
        <clipPath id="rulers"><path d="M176 70h916v781h-916z" /></clipPath>
        <linearGradient id="ring" x1="0" y1="0" x2="0" y2="1">
          <stop offset="0" stopColor="#9fdcff" /><stop offset=".25" stopColor="#8fb0ff" /><stop offset=".5" stopColor="#4a78ff" /><stop offset=".8" stopColor="#7ab8ff" /><stop offset="1" stopColor="#b8f0ff" />
        </linearGradient>
      </defs>
      <g shapeRendering="crispEdges">
        <path d="M176 70h916v806h-916z" fill="#eeeeee" />
        <path d="M176.500 875V70.500h915" fill="none" stroke="#7a8a99" />
        <path d="M177.500 71.500h913v803h-913z" fill="#e6e6e6" stroke="#404040" />
        <path d="M201.500 95.500h865v755h-865z" fill="#fff" stroke="#404040" />
        {minorsX.map((x) => <path key={x} d={`M${x + 0.5} 90v5M${x + 0.5} 851v5`} stroke="#404040" />)}
        {majorsX.map((x) => <path key={x} d={`M${x + 0.5} 85v10M${x + 0.5} 851v10`} stroke="#404040" />)}
        {minorsY.map((y) => <path key={y} d={`M196 ${y + 0.5}h5M1067 ${y + 0.5}h5`} stroke="#404040" />)}
        {majorsY.slice(0, 4).map(([y]) => <path key={y} d={`M191 ${y + 0.5}h10M1067 ${y + 0.5}h10`} stroke="#404040" />)}
      </g>
      {majorsX.map((x, i) => (
        <g key={x}>
          <Txt x={x - 21} y={82} w={42} s={9} fill="#404040">{2500000 + i * 500000}</Txt>
          <Txt x={x - 21} y={871} w={42} s={9} fill="#404040">{2500000 + i * 500000}</Txt>
        </g>
      ))}
      <g clipPath="url(#rulers)">
        {majorsY.map(([y, t]) => (
          <g key={y}>
            <g transform={`translate(188 ${y + 21}) rotate(-90)`}><Txt x={0} y={0} w={42} s={9} fill="#404040">{t}</Txt></g>
            <g transform={`translate(1080 ${y - 21}) rotate(90)`}><Txt x={0} y={0} w={42} s={9} fill="#404040">{t}</Txt></g>
          </g>
        ))}
      </g>

      <g transform="translate(290 290) scale(.33333)" shapeRendering="crispEdges">
        <polygon points={body} fill="#80ff00" />
        <g clipPath="url(#body)">{bodyAreas.map(([c, p], i) => <polygon key={i} points={cells(p)} fill={c} />)}</g>
        <polygon points="332,203 342,200 345,180 352,184 352,196 360,200 352,210 338,212" fill="#fff" />
        <path d="M822 237h9v20h-9z" fill="#00ff00" />
        <path d="M705 528h15v15h-15z" fill="#ff0000" />
      </g>
      <g transform="translate(750 95) scale(.33333)" shapeRendering="crispEdges">
        <polygon points={cells("180,65 205,62 215,68 220,76 228,65 262,57 275,53 292,60 308,63 322,75 325,95 335,110 332,122 342,124 335,145 318,152 303,155 298,180 290,210 282,225 282,240 270,242 270,262 258,270 240,272 240,297 235,300 240,337 225,330 215,345 203,350 207,365 200,375 192,408 203,412 203,430 215,435 215,455 25,455 45,440 40,415 55,412 58,385 70,372 92,365 95,350 92,325 105,320 108,330 120,312 140,305 142,292 155,290 148,280 160,270 162,250 175,235 172,220 158,208 155,196 145,180 160,170 156,142 168,138 162,122 175,120 180,98 188,85")} fill="#8000ff" />
        <polygon points={cells("212,95 235,85 248,92 255,120 270,145 278,185 268,210 268,240 258,270 240,272 240,297 205,292 205,310 180,328 158,325 155,350 162,400 175,430 192,455 140,455 92,352 122,335 130,308 155,300 148,280 160,270 162,250 175,235 172,220 158,208 145,180 160,170 156,142 205,137 212,115")} fill="#0000ff" />
        <path d="M334 122h8v8h-8z" fill="#0000ff" />
        <polygon points={cells("220,95 240,95 248,125 252,170 240,182 238,205 228,225 220,250 200,270 190,285 175,282 172,240 178,235 178,208 170,165 195,158 210,150 215,118")} fill="#0080ff" />
        <polygon points={cells("92,352 110,345 125,338 145,345 155,370 155,400 165,430 182,455 60,455")} fill="#0080ff" />
        <polygon points={cells("25,455 45,440 40,415 55,412 60,392 62,382 92,368 95,358 125,348 140,355 143,380 153,400 155,430 168,455")} fill="#00ffff" />
        <polygon points={cells("88,385 95,365 120,362 125,380 130,405 145,412 150,430 160,455 122,455 115,430 90,410")} fill="#00ff80" />
        <path d="M186 338h10v8h-10z" fill="#fff" />
      </g>

      <path d="M533.500 466.500h40v21h-40z" fill="#ccffcc" stroke="#404040" />
      <Txt x={538} y={481} w={32} s={12}>4284</Txt>

      <circle cx="1008" cy="125" r="21.500" fill="#fff" stroke="url(#ring)" strokeWidth="4" />
      <circle cx="1008" cy="125" r="23.300" fill="none" stroke="#1548c8" strokeWidth="1.200" />
      <circle cx="1008" cy="125" r="19.300" fill="none" stroke="#6a62b4" strokeWidth=".9" />
      <path d="M1008.500 106v20" stroke="#000" />
      <path d="M956.500 151.500h105v15h-105z" fill="#fff" stroke="#404040" />
      <Txt x={961} y={163} w={99} s={10}>04.01.2009 17:00:00</Txt>

      <path d="M207.500 777.500h499v67h-499z" fill="#fff" stroke="#808080" />
      <Txt x={352} y={793} w={210} s={12}>Temperatur, Face (Polygon) degC</Txt>
      {scale.map(([c, x, w]) => <rect key={x} x={x} y="802" width={w} height="17" fill={c} shapeRendering="crispEdges" />)}
      <path d="M222.500 801.500h470v18h-470z" fill="none" stroke="#888" />
      <path d="M232.500 802v19M276.500 802v19M321.500 802v19M367.500 802v19M411.500 802v19M456.500 802v19M501.500 802v19M546.500 802v19M591.500 802v19M636.500 802v19M682.500 802v19" stroke="#303030" />
      {marks.map(([t, x, w]) => <Txt key={t} x={x} y={833} w={w}>{t}</Txt>)}
      <path d="M207.500 811.500h91v33h-91z" fill="#fff" fillOpacity=".5" stroke="#c0c0c0" />
      <Txt x={211} y={825} w={82}>x: 2549448.26</Txt>
      <Txt x={211} y={841} w={82}>y: 7046731.99</Txt>

      <Txt x={876} y={821} w={27}>0 km</Txt>
      <Txt x={1025} y={821} w={41}>500 km</Txt>
      <path d="M890.500 826v14.500h156V826M890.500 833.500h156" fill="none" stroke="#000" />
      <path d="M890 833h79v7h-79z" />
    </svg>
  );
}

/* ---------- dialog ---------- */
const rows: [string, string][] = [
  ["Knotennr.", "4284"], ["X", "3186807,7584"], ["Y", "6235351,9380"], ["Z", "NaN"], ["t [sec]", "65,0000"],
  ["Datum", "04.01.2009 17:00:00"], ["z [m]", "65,3017"], ["Stroemungsgeschwindigkeit (...", "NaN"],
  ["Stroemungsgeschwindigkeit (...", "NaN"], ["magnitude_of_sea_water_velo...", "NaN"],
  ["Gesamtwassertiefe [ face ] [m]", "65,5098"], ["z_face [ face ] [m]", "29,5000"], ["z_edge [ edge ] [m]", "29,5000"],
  ["surface_downwelling_photosy...", "0,0000"], ["wave_number, Face (Polygon)...", "0,0997"],
  ["wave_height, Face (Polygon) [m]", "1,6082"], ["concentration_of_SPM_upwar...", "-0,0019"],
  ["turbulent_diffusivity_of_mome...", "0,0019"], ["temperature_at_soil_surface, ...", "5,7923"],
  ["wave_direction, Face (Polygon...", "-0,0642"], ["wave_period, Face (Polygon) [s]", "6,3552"],
  ["Temperatur, Face (Polygon) [...", "5,7923"],
];

function Dialog() {
  return (
    <div className="absolute top-[245px] left-[598px] flex h-[463px] w-[437px] flex-col rounded-t-[6px] border border-[#2b4a6b] bg-[#eeeeee] shadow-[inset_1px_0_0_#6d9fce,inset_-1px_-1px_0_#6d9fce]">
      <div className="flex h-[23px] shrink-0 items-center rounded-t-[5px] border-b border-[#2b4a6b] bg-linear-to-r from-[#4a7fb5] via-[#6c9dcf] to-[#4a7fb5] px-[5px]">
        <svg width="16" height="16" className="mt-[2px] block shrink-0 bg-[#f6f2ea]">
          <text x="0" y="13" fontSize="13" fontFamily="DejaVu Sans" fill="#222" textLength="9" lengthAdjust="spacingAndGlyphs">D</text>
          <path d="M9 5h2v2h-2zM9 9h2v2h-2z" fill="#e07a3c" />
          <path d="M12 2q4 6 0 12" fill="none" stroke="#222" strokeWidth="1.500" />
        </svg>
        <div className="flex-1 pt-[2px] pr-[3px] text-center text-[11px] font-bold tracking-[0px] text-white [text-shadow:1px_1px_0_#2b5580]">Object-Information</div>
        <svg width="54" height="14" className="mt-[2px] block" fill="none" stroke="#e6eef6">
          <path d="M2 11.500h9" strokeWidth="2" /><path d="M22.500 3.500h7v7h-7zM22 4.500h8" /><path d="M42 3.500l7 7M49 3.500l-7 7" strokeWidth="2" />
        </svg>
      </div>
      <div className="flex h-[19px] shrink-0 items-end border-b border-[#6382bf] px-[4px]">
        <div className="h-[17px] w-[43px] rounded-tl-[5px] border border-[#6382bf] border-b-0 bg-[#c8ddf2] text-center text-[11px] leading-[18px] shadow-[inset_0_1px_0_#fff,inset_0_2px_0_#6382bf]">Info</div>
      </div>
      <div className="mx-[2px] flex h-[380px] shrink-0 border-[3px] border-[#c8ddf2] bg-[#eeeeee] outline outline-[#7a8a99] -outline-offset-1">
        <div className="mt-[3px] ml-[2px] h-[371px] w-[403px] overflow-hidden border-t border-r-2 border-b border-l border-[#7a8a99] bg-white text-[11px]">
          <div className="flex h-[18px] border-b border-[#7a8a99] bg-[#eeeeee] text-center leading-[21px]">
            <div className="w-[186px] border-r border-[#7a8a99] pl-[3px] tracking-[0.180px]">Parameter</div>
            <div className="flex-1 pl-[3px]">Wert</div>
          </div>
          {rows.map(([a, b], i) => (
            <div key={i} className="flex h-[16px] border-b border-[#7a8a99] leading-[17px] whitespace-nowrap">
              <div className="w-[186px] overflow-hidden border-r border-[#7a8a99] pl-px tracking-[0.180px]">{a}</div>
              <div className="flex-1 pl-px tracking-[0.080px]">{b}</div>
            </div>
          ))}
        </div>
        <div className="mt-[2px] ml-[3px] flex h-[372px] w-[16px] flex-col border border-[#7a8a99] bg-[#eeeeee]">
          <div className="flex h-[15px] items-center justify-center"><svg width="8" height="5"><path d="M0 4.500h8l-4-4z" fill="#333" /></svg></div>
          <div className="flex h-[267px] flex-col items-center justify-center gap-px border border-[#6382bf] bg-linear-to-r from-[#dbe8f4] via-white via-30% to-[#b8cfe5]">
            {[0, 1, 2].map((i) => <div key={i} className="h-px w-[9px] bg-[#7a8a99]" />)}
          </div>
          <div className="flex-1" />
          <div className="flex h-[15px] items-center justify-center border-t border-[#7a8a99]"><svg width="8" height="5"><path d="M0 .5h8l-4 4z" fill="#333" /></svg></div>
        </div>
      </div>
      <div className="flex gap-[4px] pt-[3px] pl-[4px]">
        <div className={`h-[32px] w-[32px] border border-[#7a8a99] ${grad}`}>
          <svg width="30" height="30" className="block" shapeRendering="crispEdges">
            <path d="M3.500 5.500h14v15h-14z" fill="#a08c7c" stroke="#000" /><path d="M6.500 7.500l2-4h5l2 4z" fill="#d8d8a0" stroke="#000" />
            <path d="M12.500 10.500h9l5 4v12h-14z" fill="#e8f4ee" stroke="#234a7a" /><path d="M15.500 14.500h8v9h-8z" fill="#b4e8b4" stroke="#0a7a3a" /><path d="M15 17.500h9M15 20.500h9M18.500 15v9M21.500 15v9" stroke="#0a7a3a" />
          </svg>
        </div>
        <div className={`h-[32px] w-[32px] border border-[#7a8a99] ${grad}`}>
          <svg width="30" height="30" className="block" shapeRendering="crispEdges">
            <path d="M7.500 13.500h11v7h-11z" fill="#f5a800" stroke="#7a4a00" /><path d="M12.500 15v3" stroke="#7a4a00" />
            <path d="M16.500 13v-3q2-3 6 0v3" fill="none" stroke="#333" strokeWidth="2" />
          </svg>
        </div>
      </div>
    </div>
  );
}

/* ---------- right side ---------- */
const Eye = () => (
  <svg width="12" height="10" className="block"><path d="M.5 5q5.500-7 11 0-5.500 6-11 0z" fill="#fff" stroke="#000" /><circle cx="6" cy="5" r="2.400" /><circle cx="5.500" cy="4.500" r=".7" fill="#fff" /></svg>
);

function Combo({ w, bg, children }: { w: number; bg?: string } & Kids) {
  return (
    <div className="flex h-[20px] shrink-0 border border-[#7a8a99] text-[11px]" style={{ width: w }}>
      <div className={`flex-1 border border-[#b8cfe5] pl-px leading-[16px] ${bg ?? ""}`}>{children}</div>
      <div className={`flex w-[19px] items-center justify-center border-l border-[#7a8a99] ${bg ? "" : grad}`}><Arrow /></div>
    </div>
  );
}

const checks: [string, number[]][] = [["z", [0, 0, 0, 1, 1]], ["h", [0, 0, 0, 2, 2]], ["h-z", [0, 0, 0, 1, 1]], ["v", [1, 1, 1, 2, 2]], ["q", [2, 2, 2, 2, 2]]];

const player = [
  { m: "mr-[3px]", d: "M17 7v9l-5-4.500v4.500l-5-4.500 5-4.500v4.500z", f: "#000" },
  { m: "", d: "M7 7v10l10-5z", f: "#000" },
  { m: "", d: "M7 7v10l10-5z", f: "#f00" },
  { m: "mr-[3px]", d: "M8 8h3v9h-3zM13 8h3v9h-3z", f: "#000" },
  { m: "mr-[3px]", d: "M7 7v9l5-4.500v4.500l5-4.500-5-4.500v4.500z", f: "#000" },
  { m: "", d: "M8 8h8v8h-8z", f: "#000" },
];

function Right() {
  return (
    <div className="ml-[3px] flex h-[805px] w-[173px] shrink-0 flex-col overflow-hidden border-t border-l border-[#7a8a99]">
      <div className="mt-[6px] ml-[4px] h-[169px] shrink-0 border border-r-0 border-[#999] bg-white">
        <svg width="167" height="167" viewBox="1101 78 167 167" className="block" shapeRendering="crispEdges">
          <path d="M1102 86.500h166" stroke="#f00" />
          <g transform="translate(800 0) scale(.33333)">
            <polygon fill="#404040" points={cells("960,415 985,418 1010,410 1015,400 1090,408 1097,440 1100,465 1118,475 1140,462 1150,450 1152,433 1160,435 1167,465 1180,480 1185,508 1195,515 1195,540 1205,540 1208,520 1230,518 1232,490 1228,470 1240,455 1252,452 1255,425 1235,412 1228,390 1228,350 1245,345 1250,325 1262,320 1258,295 1268,272 1300,268 1310,285 1300,318 1280,322 1278,350 1287,365 1285,398 1295,405 1320,408 1345,388 1375,376 1395,388 1400,396 1380,405 1350,415 1330,425 1330,445 1343,460 1342,488 1325,490 1318,478 1305,475 1305,505 1310,545 1300,550 1288,567 1270,560 1240,570 1215,587 1200,575 1175,580 1160,595 1130,592 1120,598 1085,600 1075,610 1068,640 1040,645 1022,655 1020,668 1010,680 985,688 960,702 935,695 910,692 912,650 945,640 985,645 1005,640 1010,632 1000,628 1022,605 1005,600 998,560 985,540 980,520 965,515 985,485 965,475 965,455 957,450")} />
            <path fill="#fff" d="M1129 508h15v10h-3v22l-2 16 3 14 12 14h-9l-6-10-2-34h-4l-4-20zM1168 540h8v6h-8z" />
          </g>
        </svg>
      </div>
      <div className="mt-[6px] ml-[2px] flex h-[20px] shrink-0 gap-px text-[11px] leading-[20px]">
        <div className={`w-[86px] shrink-0 border border-[#7a8a99] text-center ${grad}`}>aktualisieren</div>
        <div className={`w-[90px] shrink-0 border border-[#7a8a99] pl-[10px] ${grad}`}>Darstellung</div>
      </div>
      <div className="mt-px h-px shrink-0 bg-[#7a8a99]" />
      <div className="mt-[6px] ml-[3px] h-[461px] shrink-0 border border-r-0 border-[#999] pl-[3px] text-[11px]">
        <div className="-mt-[8px] ml-[2px] h-[16px] w-max bg-[#eeeeee] px-px leading-[18px] tracking-[0.150px] text-black">Bearbeitungslayer</div>
        <div className="mt-px h-[286px] w-[163px] border border-[#7a8a99] bg-white">
          <div className="flex h-[20px] items-center gap-[3px] bg-[#ffd9ff] pl-[3px] pt-[2px] leading-[18px]"><Eye />Maskierungslayer</div>
          <div className="mt-[6px] h-[41px] bg-[#9e9eff]">
            <div className="flex h-[20px] items-center gap-[3px] pt-[2px] pl-[3px]"><Eye />davit_T</div>
            <div className="flex pl-[18px]"><Combo w={143} bg="bg-[#9e9eff]">Layer 0 [29.0,30.0]</Combo></div>
          </div>
        </div>
        <div className="flex">{["pencil", "pencilX", "listPlus", "eye", "eyeShut", "eyeRed", "prev", "next"].map((n) => <SmallBtn key={n} n={n} />)}</div>
        <div className="flex pl-[60px]"><SmallBtn n="clock" on /><SmallBtn n="xy" on /><SmallBtn n="half" on /><SmallBtn n="gridDim" /><SmallBtn n="grid" /></div>
        <div className="mt-[3px] flex"><SmallBtn n="pts" /><SmallBtn n="ptXY" /><SmallBtn n="ptI" /><SmallBtn n="tri" /><SmallBtn n="triI" /><SmallBtn n="cur" on /><SmallBtn n="curI" dim /><SmallBtn n="curT" dim /></div>
        <div className="flex">
          <div className="w-[124px]">
            <svg width="124" height="21" viewBox="1103 639 124 21" className="block" fill="none" stroke="#000" shapeRendering="crispEdges">
              <path d="M1127 646l9 9M1130 655l8-8M1134 645.500h4.500v4.500" />
              <path shapeRendering="auto" strokeWidth=".9" d="M1147.500 646v5M1148 646l9 9M1147.500 646l1.500 9.500h8M1149 655l8-9M1153 645.500h4.500v4.500M1157 651v4" />
              <path d="M1168 651l3-4M1168 645.500h3.500v3M1174 650l4-4M1175 645.500h3.500v3M1168 656l3-4M1168 651.500h3.500v3M1174 656l4-4M1175 651.500h3.500v3" />
              <path shapeRendering="auto" strokeWidth=".9" d="M1187.500 645.500v10.500l8.500-4zM1187.500 656l6.500-8M1190 646.500h4.500v3.500" /><text x="1194" y="650" fontSize="8" fill="#000" stroke="none" fontFamily="DejaVu Sans">S</text>
              <path shapeRendering="auto" d="M1211 645l-4.500 10.500h9z" fill="#888" />
            </svg>
            {checks.map(([t, c]) => (
              <div key={t} className="flex h-[16px]">
                <div className="mr-[2px] w-[20px] text-right leading-[13px] whitespace-nowrap">{t}</div>
                {c.map((v, i) => <div key={i} className={`mr-[7px] h-[13px] w-[13px] shrink-0 ${v ? "border border-[#7a8a99]" : ""} ${v === 1 ? grad : ""}`} />)}
              </div>
            ))}
          </div>
          <div className={`mt-[19px] ml-[16px] h-[16px] w-[20px] border border-[#7a8a99] ${grad}`}>
            <svg width="18" height="14" className="block" shapeRendering="crispEdges"><path d="M2 1q2 10 14 12v-4q-5 1-8-1z" fill="#aaa" /><path d="M2 1q2 10 14 12M6 1l2 6 2-5 2 5 3-6" fill="none" stroke="#000" /></svg>
          </div>
        </div>
      </div>
      <div className={`mt-[4px] h-[6px] shrink-0 ${dots}`} />
      <div className="mt-px h-px shrink-0 bg-[#7a8a99]" />
      <div className="mt-[7px] ml-[3px] h-[106px] shrink-0 border border-r-0 border-[#999] pl-[6px] text-[11px]">
        <div className="-mt-[9px] -ml-[2px] h-[18px] w-max bg-[#eeeeee] px-[2px] leading-[20px]">Player</div>
        <div className="mt-[2px] flex">
          {player.map((p, i) => (
            <div key={i} className={`h-[24px] w-[24px] shrink-0 border border-[#7a8a99] ${grad} ${p.m}`}>
              <svg width="22" height="22" viewBox="1 1 22 22" className="block" shapeRendering="crispEdges"><path d={p.d} fill={p.f} /></svg>
            </div>
          ))}
        </div>
        <div className="mt-[5px] flex items-center"><span className="w-[72px] shrink-0 pl-[2px] tracking-[0.150px]">Zeitschritt:</span><Combo w={87}>0</Combo></div>
        <div className="flex h-[20px] items-center"><span className="w-[72px] shrink-0 pl-[2px]">Zeit:</span><span className="w-[69px] pl-px tracking-[0.200px]">65.0</span>
          <div className={`h-[18px] w-[18px] border border-[#7a8a99] ${grad}`}><svg width="16" height="16" className="block" fill="none" stroke="#000" shapeRendering="crispEdges"><path d="M2 4.500h4M3 9.500l4-5v4M10.500 9V4.500h4M10 9l4-5M2 12.500h11M3 10.500h4" /></svg></div>
        </div>
        <div className="flex items-center"><span className="w-[73px] shrink-0 pl-px tracking-[0.200px]">Verzögeru...</span><Combo w={86}><span className="tracking-[-0.150px]">50 msec</span></Combo></div>
      </div>
      <div className="mt-[7px] h-px shrink-0 bg-[#7a8a99]" />
    </div>
  );
}

export default function App() {
  return (
    <div className="relative flex h-[882px] w-[1268px] flex-col overflow-hidden border-l border-[#777] bg-[#eeeeee] font-['DejaVu_Sans',sans-serif] text-[11px] tracking-[0.120px] text-[#333]">
      <div className="h-[5px] shrink-0 bg-[#faf6ee]">
        <svg width="1200" height="3" className="block"><path d="M15 0h3v1h-3zM20 0h2v1h-2zM381 0h2v1h-2zM477 0h2v1h-2zM530 0h2v1h-2zM778 0h2v2h-2zM875 0h4v1h-4z" fill="#555" /></svg>
      </div>
      <div className="flex h-[21px] shrink-0 gap-[12px] border-b border-[#ccc] bg-linear-to-b from-white to-[#dedede] pl-[6px] leading-[19px] tracking-[0.060px]">
        {["Datei", "Bearbeiten", "Funktionen", "Ansicht", "Lizenz", "Hilfe"].map((m) => <span key={m}>{m}</span>)}
      </div>
      <div className="flex h-[44px] shrink-0 border-t border-white pt-[4px] pl-[5px]">
        <ToolGroup w={78}><ToolBtn n="open" /><ToolBtn n="saveAll" /></ToolGroup>
        <ToolGroup w={318}>{["layQ", "layMD", "layBlue", "layFolder", "layRed1", "layRed", "layMove", "saveDim", "saveLay", "saveDimQ"].map((n) => <ToolBtn key={n} n={n} />)}</ToolGroup>
        <ToolGroup w={48}><ToolBtn n="undo" /></ToolGroup>
        <ToolGroup w={343}>
          {["magBox", "hand", "fit", "fitLay", "zoomIn"].map((n) => <ToolBtn key={n} n={n} />)}
          <div className="flex h-[30px] w-[55px] shrink-0 border border-[#7a8a99]">
            <div className="w-[40px] border border-[#b8cfe5] bg-white pl-px leading-[27px] tracking-[-0.400px]">50</div>
            <div className={`flex flex-1 items-center justify-center border-l border-[#7a8a99] ${grad}`}><svg width="8" height="5"><path d="M0 .5h8l-4 4z" /></svg></div>
          </div>
          {["zoomOut", "zoomBack", "zoomFolder", "zoomSave"].map((n) => <ToolBtn key={n} n={n} />)}
        </ToolGroup>
        <ToolGroup w={198}>{["camera", "ruler", "axis3d", "scriptGear", "dGear", "check"].map((n) => <ToolBtn key={n} n={n} />)}</ToolGroup>
        <ToolGroup w={48}><ToolBtn n="crs" /></ToolGroup>
      </div>
      <div className="flex h-[806px] shrink-0">
        <div className="flex w-[175px] shrink-0 flex-col border-r border-white pt-[6px] pr-[3px] pl-[2px]">
          <div className="h-[107px] shrink-0 border border-[#999] pl-[5px]">
            <div className="-mt-[8px] h-[16px] w-max bg-[#eeeeee] px-px leading-[18px]">Module</div>
            <div className="mt-px flex flex-col gap-px">
              <Row names={["triQ*", "river", "wave"]} />
              <Row names={["bits", "polyPlus", "pathSel", "dimPoly"]} />
              <Row names={["map", "globeGear", "dbHead", "dimGear"]} />
            </div>
          </div>
          <div className="mt-[9px] h-[681px] shrink-0 border border-[#999] pl-[5px] tracking-[0.150px]">
            <div className="-mt-[8px] h-[12px] w-max bg-[#eeeeee] px-px leading-[18px]">Simulationsdaten-Analyse</div>
            <Section title="Ergebnisdaten-Analyse" rows={[["nodeQ*", "nodeMag", "lineQ", "triangleQ", "triangleMag"], ["meshQ", "meshS", "tableQ"]]} />
            <Section title="Zeitreihen-Analyse" rows={[["node12", "chart", "chartDim", "bars", "scatter"]]} />
            <Section title="Differenzen-Analyse" rows={[["meshAB"]]} />
            <Section title="Volumen-Analyse" rows={[["volQ", "volAB"]]} />
            <Section title="Profilschnitt-Analyse" rows={[["prof", "wedge", "wedgeX", "flow"], ["prof3d"]]} />
            <Section title="Statistik / Geostatistik" rows={[["stat", "curve"]]} />
            <Section title="Funktions-Analyse" rows={[["func"]]} />
          </div>
        </div>
        <MapView />
        <Right />
      </div>
      <div className="flex h-[6px] shrink-0 gap-[3px] pt-px">
        <div className="w-[59px] border-t-2 border-r border-[#808080]" />
        <div className="w-[54px] border-t-2 border-l border-[#808080]" />
        <div className="w-[53px] border-t-2 border-l border-[#808080]" />
        <div className="w-[923px] border-t-2 border-l border-[#808080]" />
        <div className="flex-1 border-t-2 border-l border-[#808080]" />
      </div>
      <Dialog />
    </div>
  );
}
